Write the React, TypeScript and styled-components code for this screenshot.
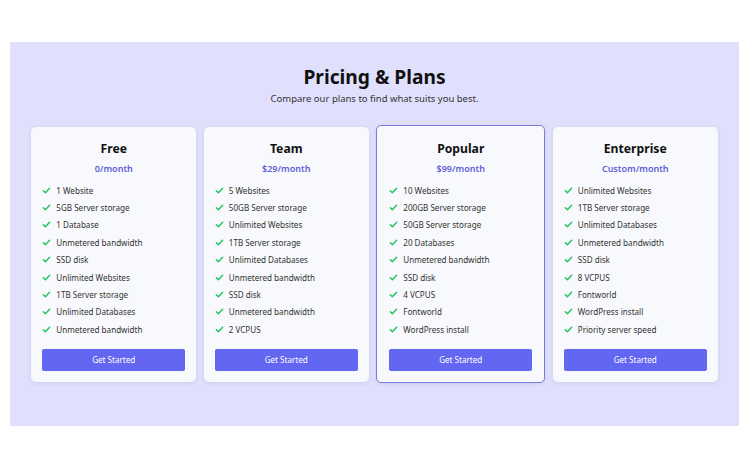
import styled, { createGlobalStyle } from 'styled-components'

const GlobalStyle = createGlobalStyle`
    body {
        margin: 0;
        background: #ffffff;
        font-family: "Noto Sans", "Open Sans", sans-serif;
    }
`

const Page = styled.div`
    padding: 42px 11px 44px 10px;
`

const Section = styled.section`
    background: #e0e0fc;
    padding: 22px 0 43px;
    display: flex;
    flex-direction: column;
    align-items: center;
`

const Title = styled.h1`
    margin: 0;
    font-size: 19.2px;
    line-height: 26px;
    font-weight: 700;
    color: #111111;
`

const Subtitle = styled.p`
    margin: 2px 0 0;
    font-size: 9.5px;
    line-height: 14px;
    color: #333333;
`

const CardRow = styled.div`
    margin-top: 19px;
    display: flex;
    align-items: center;
    gap: 7.5px;
`

const Card = styled.div<{ $popular?: boolean }>`
    box-sizing: border-box;
    width: ${p => (p.$popular ? '169px' : '165px')};
    height: ${p => (p.$popular ? '258px' : '255px')};
    padding: ${p => (p.$popular ? '11.5px 12px 0 12px' : '11px 11px 0')};
    background: #f8f9fc;
    border-radius: 5px;
    border: ${p => (p.$popular ? '1px solid #7a7ce0' : 'none')};
    box-shadow: 0 1px 4px rgba(60, 60, 120, 0.12);
    display: flex;
    flex-direction: column;
`

const PlanName = styled.h2`
    margin: 0;
    text-align: center;
    font-size: 12.2px;
    line-height: 21px;
    font-weight: 700;
    color: #111111;
`

const Price = styled.div`
    margin-top: 1px;
    text-align: center;
    font-size: 9px;
    line-height: 17px;
    font-weight: 600;
    color: #5f5fd8;
`

const Features = styled.ul`
    list-style: none;
    margin: 5px 0 0;
    padding: 0;
    height: 157px;
`

const Feature = styled.li`
    display: flex;
    align-items: center;
    gap: 5px;
    height: 17.4px;
    font-size: 8.1px;
    color: #333333;
`

const Check = styled.svg`
    width: 9px;
    height: 9px;
    flex: none;
`

const Button = styled.button`
    margin-top: 10px;
    width: 143px;
    height: 22px;
    border: none;
    border-radius: 2px;
    background: #6366f1;
    color: #ffffff;
    font-family: inherit;
    font-size: 8.1px;
    cursor: pointer;
`

const plans = [
    {
        name: 'Free',
        price: '0/month',
        features: ['1 Website', '5GB Server storage', '1 Database', 'Unmetered bandwidth', 'SSD disk', 'Unlimited Websites', '1TB Server storage', 'Unlimited Databases', 'Unmetered bandwidth'],
    },
    {
        name: 'Team',
        price: '$29/month',
        features: ['5 Websites', '50GB Server storage', 'Unlimited Websites', '1TB Server storage', 'Unlimited Databases', 'Unmetered bandwidth', 'SSD disk', 'Unmetered bandwidth', '2 VCPUS'],
    },
    {
        name: 'Popular',
        price: '$99/month',
        popular: true,
        features: ['10 Websites', '200GB Server storage', '50GB Server storage', '20 Databases', 'Unmetered bandwidth', 'SSD disk', '4 VCPUS', 'Fontworld', 'WordPress install'],
    },
    {
        name: 'Enterprise',
        price: 'Custom/month',
        features: ['Unlimited Websites', '1TB Server storage', 'Unlimited Databases', 'Unmetered bandwidth', 'SSD disk', '8 VCPUS', 'Fontworld', 'WordPress install', 'Priority server speed'],
    },
]

const CheckIcon = () => (
    <Check viewBox="0 0 20 20">
        <path d="M3 10.5l4.5 4.5L17 5" fill="none" stroke="#22c55e" strokeWidth="3.2" strokeLinecap="round" strokeLinejoin="round" />
    </Check>
)

const App = () => {
    return (
        <>
            <GlobalStyle />
            <Page>
                <Section>
                    <Title>Pricing &amp; Plans</Title>
                    <Subtitle>Compare our plans to find what suits you best.</Subtitle>
                    <CardRow>
                        {plans.map(plan => (
                            <Card key={plan.name} $popular={plan.popular}>
                                <PlanName>{plan.name}</PlanName>
                                <Price>{plan.price}</Price>
                                <Features>
                                    {plan.features.map((f, i) => (
                                        <Feature key={i}>
                                            <CheckIcon />
                                            {f}
                                        </Feature>
                                    ))}
                                </Features>
                                <Button>Get Started</Button>
                            </Card>
                        ))}
                    </CardRow>
                </Section>
            </Page>
        </>
    )
}

export default App
